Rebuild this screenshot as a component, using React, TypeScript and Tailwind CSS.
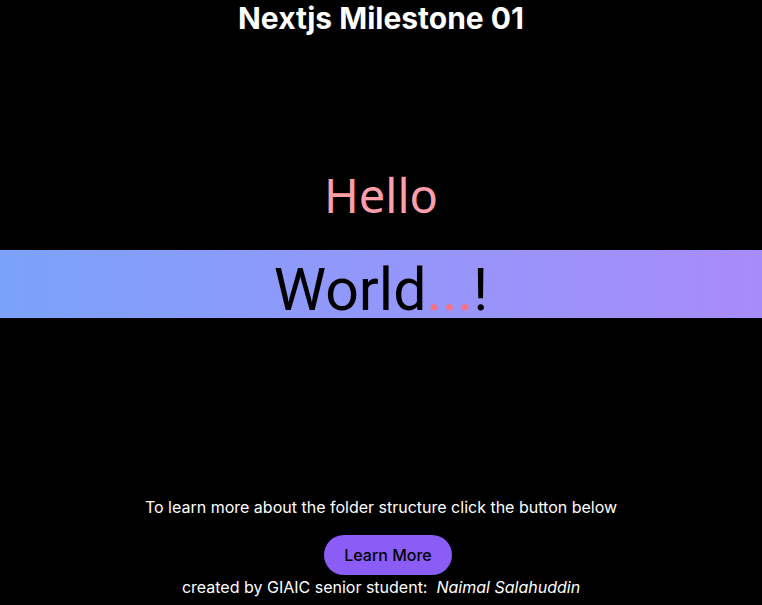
export default function App() {
  return (
    <div className="min-h-screen w-full bg-black text-white flex flex-col items-center font-['Inter',sans-serif]">
      <h1 className="text-[30px] leading-[36px] font-bold text-white">Nextjs Milestone 01</h1>

      {/* greeting block */}
      <div className="w-full flex flex-col items-center mt-[129px]">
        <p className="text-[47px] leading-[60px] text-[#ff9ea8] font-['Noto_Sans',sans-serif]">Hello</p>
        <div className="w-full h-[68px] mt-[25px] flex items-end justify-center bg-gradient-to-r from-[#7aa2fb] to-[#a78bfa]">
          <span className="text-[59px] leading-[68px] text-black font-['Roboto',sans-serif] font-normal translate-y-[6px]">
            World<span className="text-[#f87187]">...</span>!
          </span>
        </div>
      </div>

      <p className="mt-[177px] text-base leading-6 text-white">
        To learn more about the folder structure click the button below
      </p>
      <button className="mt-[16px] ml-[14px] h-10 px-5 rounded-full bg-[#8b5cf6] text-black font-medium text-base">
        Learn More
      </button>
      <p className="text-base leading-6 text-white">
        created by GIAIC senior student:&nbsp; <em className="italic">Naimal Salahuddin</em>
      </p>
    </div>
  );
}
